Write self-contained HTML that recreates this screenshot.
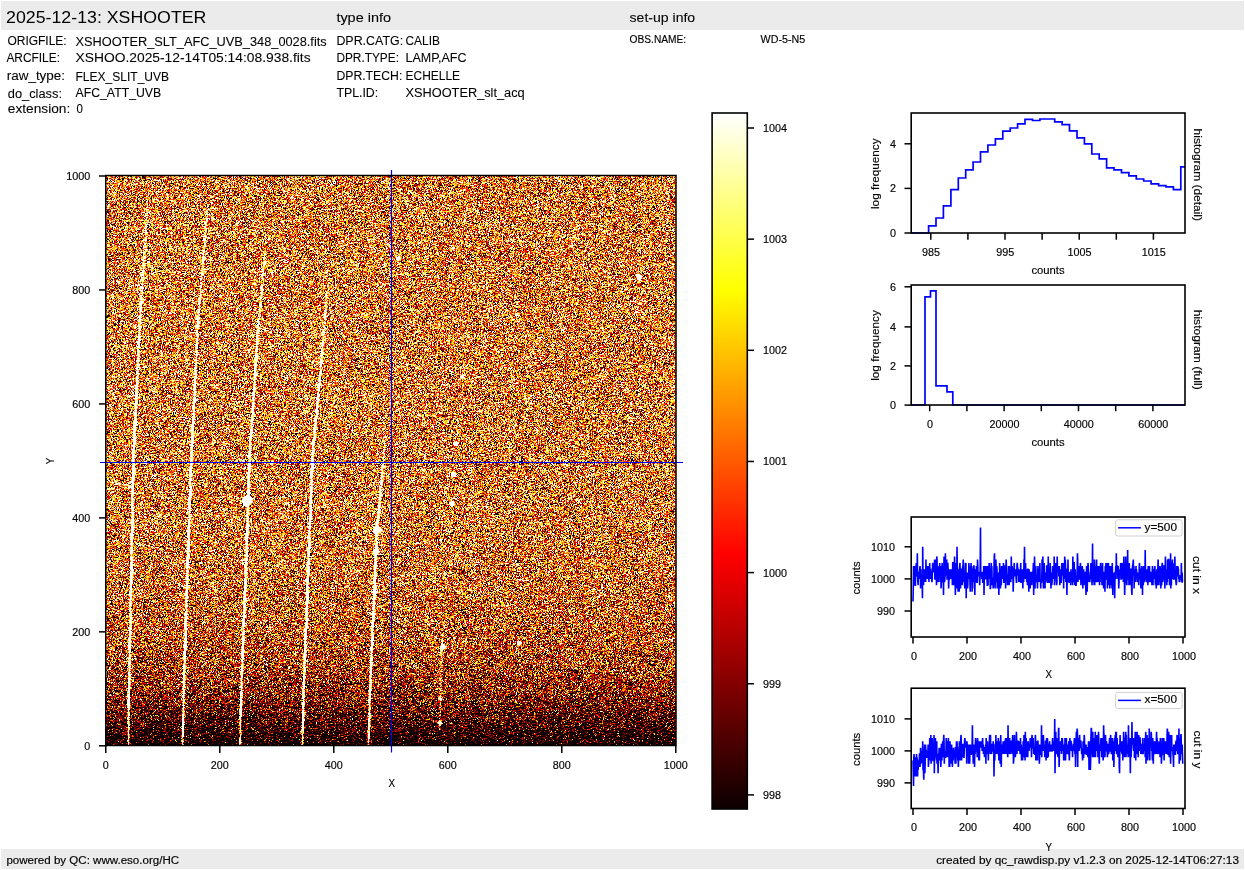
<!DOCTYPE html>
<html><head><meta charset="utf-8"><style>
html,body{margin:0;padding:0;background:#fff;}
body{width:1245px;height:870px;overflow:hidden;position:relative;}
svg{position:absolute;left:0;top:0;}
#imgwrap{position:absolute;left:106px;top:176px;width:570px;height:570px;
background:linear-gradient(to bottom,#d17c36 0%,#d27b36 30%,#ce7a38 50%,#ce7733 65%,#c66b2b 75%,#b85b21 82.5%,#a34616 87.5%,#7b280a 92.5%,#521304 96%,#320801 100%);}
#img{position:absolute;left:0;top:0;width:570px;height:570px;}
</style></head><body>
<div id="imgwrap"><canvas id="img" width="570" height="570"></canvas></div>
<svg width="1245" height="870" viewBox="0 0 1245 870" font-family="Liberation Sans, sans-serif" stroke-width="0">
<rect x="1" y="1" width="1243" height="29" fill="#ebebeb" stroke="none" stroke-width="1"/>
<rect x="1" y="849" width="1243" height="20" fill="#ebebeb" stroke="none" stroke-width="1"/>
<text x="6.1" y="23.1" font-size="17" textLength="200.3" lengthAdjust="spacingAndGlyphs" fill="#000">2025-12-13: XSHOOTER</text>
<text x="336.4" y="22.3" font-size="12" textLength="54.6" lengthAdjust="spacingAndGlyphs" stroke="#000" stroke-width="0.08" fill="#000">type info</text>
<text x="629.6" y="22.3" font-size="12" textLength="65.6" lengthAdjust="spacingAndGlyphs" stroke="#000" stroke-width="0.08" fill="#000">set-up info</text>
<text x="7.4" y="45.2" font-size="12" textLength="59.3" lengthAdjust="spacingAndGlyphs" stroke="#000" stroke-width="0.08" fill="#000">ORIGFILE:</text>
<text x="6.4" y="61.5" font-size="12" textLength="53.6" lengthAdjust="spacingAndGlyphs" stroke="#000" stroke-width="0.08" fill="#000">ARCFILE:</text>
<text x="6.7" y="79.6" font-size="12" textLength="58.4" lengthAdjust="spacingAndGlyphs" stroke="#000" stroke-width="0.08" fill="#000">raw_type:</text>
<text x="7.8" y="97.5" font-size="12" textLength="54.2" lengthAdjust="spacingAndGlyphs" stroke="#000" stroke-width="0.08" fill="#000">do_class:</text>
<text x="7.8" y="113.3" font-size="12" textLength="62.5" lengthAdjust="spacingAndGlyphs" stroke="#000" stroke-width="0.08" fill="#000">extension:</text>
<text x="75.5" y="45.6" font-size="12" textLength="251.2" lengthAdjust="spacingAndGlyphs" stroke="#000" stroke-width="0.08" fill="#000">XSHOOTER_SLT_AFC_UVB_348_0028.fits</text>
<text x="75.5" y="61.5" font-size="12" textLength="235.1" lengthAdjust="spacingAndGlyphs" stroke="#000" stroke-width="0.08" fill="#000">XSHOO.2025-12-14T05:14:08.938.fits</text>
<text x="75.5" y="80.8" font-size="12" textLength="93.6" lengthAdjust="spacingAndGlyphs" stroke="#000" stroke-width="0.08" fill="#000">FLEX_SLIT_UVB</text>
<text x="75.5" y="97.3" font-size="12" textLength="85.7" lengthAdjust="spacingAndGlyphs" stroke="#000" stroke-width="0.08" fill="#000">AFC_ATT_UVB</text>
<text x="76.6" y="113.4" font-size="12" textLength="6.4" lengthAdjust="spacingAndGlyphs" stroke="#000" stroke-width="0.08" fill="#000">0</text>
<text x="336.4" y="44.8" font-size="12" textLength="66.7" lengthAdjust="spacingAndGlyphs" stroke="#000" stroke-width="0.08" fill="#000">DPR.CATG:</text>
<text x="336.4" y="62" font-size="12" textLength="62.6" lengthAdjust="spacingAndGlyphs" stroke="#000" stroke-width="0.08" fill="#000">DPR.TYPE:</text>
<text x="336.4" y="79.7" font-size="12" textLength="65.9" lengthAdjust="spacingAndGlyphs" stroke="#000" stroke-width="0.08" fill="#000">DPR.TECH:</text>
<text x="336.4" y="96.9" font-size="12" textLength="41.8" lengthAdjust="spacingAndGlyphs" stroke="#000" stroke-width="0.08" fill="#000">TPL.ID:</text>
<text x="405.5" y="44.8" font-size="12" textLength="34.5" lengthAdjust="spacingAndGlyphs" stroke="#000" stroke-width="0.08" fill="#000">CALIB</text>
<text x="405.5" y="62" font-size="12" textLength="61" lengthAdjust="spacingAndGlyphs" stroke="#000" stroke-width="0.08" fill="#000">LAMP,AFC</text>
<text x="405.5" y="79.7" font-size="12" textLength="54.6" lengthAdjust="spacingAndGlyphs" stroke="#000" stroke-width="0.08" fill="#000">ECHELLE</text>
<text x="405.5" y="96.9" font-size="12" textLength="119.2" lengthAdjust="spacingAndGlyphs" stroke="#000" stroke-width="0.08" fill="#000">XSHOOTER_slt_acq</text>
<text x="629.6" y="42.8" font-size="10" textLength="56.6" lengthAdjust="spacingAndGlyphs" stroke="#000" stroke-width="0.15" fill="#000">OBS.NAME:</text>
<text x="760.6" y="42.8" font-size="10" textLength="44.5" lengthAdjust="spacingAndGlyphs" stroke="#000" stroke-width="0.15" fill="#000">WD-5-N5</text>
<text x="6.4" y="864.1" font-size="10" textLength="172.7" lengthAdjust="spacingAndGlyphs" stroke="#000" stroke-width="0.15" fill="#000">powered by QC: www.eso.org/HC</text>
<text x="936.2" y="864.1" font-size="10" textLength="302.8" lengthAdjust="spacingAndGlyphs" stroke="#000" stroke-width="0.15" fill="#000">created by qc_rawdisp.py v1.2.3 on 2025-12-14T06:27:13</text>
<line x1="391.5" y1="170" x2="391.5" y2="752.4" stroke="#0000ff" stroke-width="1.2"/>
<line x1="100" y1="462.5" x2="683" y2="462.5" stroke="#0000ff" stroke-width="1.2"/>
<rect x="105.75" y="175.5" width="570.25" height="570.0" fill="none" stroke="#000" stroke-width="1.5"/>
<line x1="99" y1="745.8" x2="105.75" y2="745.8" stroke="#000" stroke-width="1.5"/>
<text x="90.3" y="749.5" font-size="10" textLength="6.0" lengthAdjust="spacingAndGlyphs" stroke="#000" stroke-width="0.15" text-anchor="end" fill="#000">0</text>
<line x1="105.8" y1="745.5" x2="105.8" y2="752.9" stroke="#000" stroke-width="1.5"/>
<text x="105.8" y="769.2" font-size="10" textLength="6.0" lengthAdjust="spacingAndGlyphs" stroke="#000" stroke-width="0.15" text-anchor="middle" fill="#000">0</text>
<line x1="99" y1="631.8399999999999" x2="105.75" y2="631.8399999999999" stroke="#000" stroke-width="1.5"/>
<text x="90.3" y="635.54" font-size="10" textLength="18.0" lengthAdjust="spacingAndGlyphs" stroke="#000" stroke-width="0.15" text-anchor="end" fill="#000">200</text>
<line x1="219.8" y1="745.5" x2="219.8" y2="752.9" stroke="#000" stroke-width="1.5"/>
<text x="219.8" y="769.2" font-size="10" textLength="18.0" lengthAdjust="spacingAndGlyphs" stroke="#000" stroke-width="0.15" text-anchor="middle" fill="#000">200</text>
<line x1="99" y1="517.88" x2="105.75" y2="517.88" stroke="#000" stroke-width="1.5"/>
<text x="90.3" y="521.58" font-size="10" textLength="18.0" lengthAdjust="spacingAndGlyphs" stroke="#000" stroke-width="0.15" text-anchor="end" fill="#000">400</text>
<line x1="333.8" y1="745.5" x2="333.8" y2="752.9" stroke="#000" stroke-width="1.5"/>
<text x="333.8" y="769.2" font-size="10" textLength="18.0" lengthAdjust="spacingAndGlyphs" stroke="#000" stroke-width="0.15" text-anchor="middle" fill="#000">400</text>
<line x1="99" y1="403.91999999999996" x2="105.75" y2="403.91999999999996" stroke="#000" stroke-width="1.5"/>
<text x="90.3" y="407.62" font-size="10" textLength="18.0" lengthAdjust="spacingAndGlyphs" stroke="#000" stroke-width="0.15" text-anchor="end" fill="#000">600</text>
<line x1="447.8" y1="745.5" x2="447.8" y2="752.9" stroke="#000" stroke-width="1.5"/>
<text x="447.8" y="769.2" font-size="10" textLength="18.0" lengthAdjust="spacingAndGlyphs" stroke="#000" stroke-width="0.15" text-anchor="middle" fill="#000">600</text>
<line x1="99" y1="289.96" x2="105.75" y2="289.96" stroke="#000" stroke-width="1.5"/>
<text x="90.3" y="293.66" font-size="10" textLength="18.0" lengthAdjust="spacingAndGlyphs" stroke="#000" stroke-width="0.15" text-anchor="end" fill="#000">800</text>
<line x1="561.8" y1="745.5" x2="561.8" y2="752.9" stroke="#000" stroke-width="1.5"/>
<text x="561.8" y="769.2" font-size="10" textLength="18.0" lengthAdjust="spacingAndGlyphs" stroke="#000" stroke-width="0.15" text-anchor="middle" fill="#000">800</text>
<line x1="99" y1="176.0" x2="105.75" y2="176.0" stroke="#000" stroke-width="1.5"/>
<text x="90.3" y="179.7" font-size="10" textLength="24.0" lengthAdjust="spacingAndGlyphs" stroke="#000" stroke-width="0.15" text-anchor="end" fill="#000">1000</text>
<line x1="675.8" y1="745.5" x2="675.8" y2="752.9" stroke="#000" stroke-width="1.5"/>
<text x="675.8" y="769.2" font-size="10" textLength="24.0" lengthAdjust="spacingAndGlyphs" stroke="#000" stroke-width="0.15" text-anchor="middle" fill="#000">1000</text>
<text x="391.7" y="787" font-size="10" textLength="6.5" lengthAdjust="spacingAndGlyphs" stroke="#000" stroke-width="0.15" text-anchor="middle" fill="#000">X</text>
<text transform="translate(53.9,461) rotate(-90)" font-size="10" textLength="6.5" lengthAdjust="spacingAndGlyphs" stroke="#000" stroke-width="0.15" text-anchor="middle" fill="#000">Y</text>
<defs><linearGradient id="hot" x1="0" y1="1" x2="0" y2="0"><stop offset="0" stop-color="#0b0000"/><stop offset="0.365" stop-color="#ff0000"/><stop offset="0.746" stop-color="#ffff00"/><stop offset="1" stop-color="#ffffff"/></linearGradient></defs>
<rect x="712.1" y="113" width="35.2" height="696" fill="url(#hot)" stroke="#000" stroke-width="1.6"/>
<line x1="747" y1="128.0" x2="754" y2="128.0" stroke="#000" stroke-width="1.5"/>
<text x="763" y="131.9" font-size="10" textLength="24.0" lengthAdjust="spacingAndGlyphs" stroke="#000" stroke-width="0.15" fill="#000">1004</text>
<line x1="747" y1="239.15" x2="754" y2="239.15" stroke="#000" stroke-width="1.5"/>
<text x="763" y="243.05" font-size="10" textLength="24.0" lengthAdjust="spacingAndGlyphs" stroke="#000" stroke-width="0.15" fill="#000">1003</text>
<line x1="747" y1="350.3" x2="754" y2="350.3" stroke="#000" stroke-width="1.5"/>
<text x="763" y="354.2" font-size="10" textLength="24.0" lengthAdjust="spacingAndGlyphs" stroke="#000" stroke-width="0.15" fill="#000">1002</text>
<line x1="747" y1="461.45000000000005" x2="754" y2="461.45000000000005" stroke="#000" stroke-width="1.5"/>
<text x="763" y="465.35" font-size="10" textLength="24.0" lengthAdjust="spacingAndGlyphs" stroke="#000" stroke-width="0.15" fill="#000">1001</text>
<line x1="747" y1="572.6" x2="754" y2="572.6" stroke="#000" stroke-width="1.5"/>
<text x="763" y="576.5" font-size="10" textLength="24.0" lengthAdjust="spacingAndGlyphs" stroke="#000" stroke-width="0.15" fill="#000">1000</text>
<line x1="747" y1="683.75" x2="754" y2="683.75" stroke="#000" stroke-width="1.5"/>
<text x="763" y="687.65" font-size="10" textLength="18.0" lengthAdjust="spacingAndGlyphs" stroke="#000" stroke-width="0.15" fill="#000">999</text>
<line x1="747" y1="794.9000000000001" x2="754" y2="794.9000000000001" stroke="#000" stroke-width="1.5"/>
<text x="763" y="798.8" font-size="10" textLength="18.0" lengthAdjust="spacingAndGlyphs" stroke="#000" stroke-width="0.15" fill="#000">998</text>
<path d="M911.2,233 L928.6,233 L928.6,225.8 L936.0,225.8 L936.0,218 L943.4,218 L943.4,205.9 L950.9,205.9 L950.9,189.7 L958.3,189.7 L958.3,178 L965.7,178 L965.7,169.9 L973.1,169.9 L973.1,162 L980.5,162 L980.5,151.9 L987.9,151.9 L987.9,145 L995.4,145 L995.4,138.8 L1002.8,138.8 L1002.8,131.1 L1010.2,131.1 L1010.2,128 L1017.6,128 L1017.6,123.9 L1025.0,123.9 L1025.0,119.3 L1032.5,119.3 L1032.5,120.5 L1039.9,120.5 L1039.9,119 L1047.3,119 L1047.3,119 L1054.7,119 L1054.7,121.8 L1062.1,121.8 L1062.1,124.7 L1069.5,124.7 L1069.5,130.8 L1077.0,130.8 L1077.0,137.9 L1084.4,137.9 L1084.4,143.8 L1091.8,143.8 L1091.8,154 L1099.2,154 L1099.2,158.8 L1106.6,158.8 L1106.6,167.8 L1114.0,167.8 L1114.0,169.9 L1121.5,169.9 L1121.5,172.7 L1128.9,172.7 L1128.9,175.9 L1136.3,175.9 L1136.3,179 L1143.7,179 L1143.7,181 L1151.1,181 L1151.1,183.8 L1158.6,183.8 L1158.6,185.7 L1166.0,185.7 L1166.0,186.8 L1173.4,186.8 L1173.4,189.7 L1180.8,189.7 L1180.8,166.8 L1185.0,166.8" fill="none" stroke="#0000ff" stroke-width="1.7"/>
<rect x="911.2" y="113" width="273.79999999999995" height="120" fill="none" stroke="#000" stroke-width="1.6"/>
<line x1="904.5" y1="233" x2="911.2" y2="233" stroke="#000" stroke-width="1.5"/>
<text x="896" y="236.7" font-size="10" textLength="6.0" lengthAdjust="spacingAndGlyphs" stroke="#000" stroke-width="0.15" text-anchor="end" fill="#000">0</text>
<line x1="904.5" y1="188.4" x2="911.2" y2="188.4" stroke="#000" stroke-width="1.5"/>
<text x="896" y="192.1" font-size="10" textLength="6.0" lengthAdjust="spacingAndGlyphs" stroke="#000" stroke-width="0.15" text-anchor="end" fill="#000">2</text>
<line x1="904.5" y1="143.8" x2="911.2" y2="143.8" stroke="#000" stroke-width="1.5"/>
<text x="896" y="147.5" font-size="10" textLength="6.0" lengthAdjust="spacingAndGlyphs" stroke="#000" stroke-width="0.15" text-anchor="end" fill="#000">4</text>
<line x1="930.8" y1="233" x2="930.8" y2="239.7" stroke="#000" stroke-width="1.5"/>
<text x="931.0999999999999" y="256.3" font-size="10" textLength="18.0" lengthAdjust="spacingAndGlyphs" stroke="#000" stroke-width="0.15" text-anchor="middle" fill="#000">985</text>
<line x1="967.9" y1="233" x2="967.9" y2="239.7" stroke="#000" stroke-width="1.5"/>
<line x1="1005.0" y1="233" x2="1005.0" y2="239.7" stroke="#000" stroke-width="1.5"/>
<text x="1005.3" y="256.3" font-size="10" textLength="18.0" lengthAdjust="spacingAndGlyphs" stroke="#000" stroke-width="0.15" text-anchor="middle" fill="#000">995</text>
<line x1="1042.1" y1="233" x2="1042.1" y2="239.7" stroke="#000" stroke-width="1.5"/>
<line x1="1079.2" y1="233" x2="1079.2" y2="239.7" stroke="#000" stroke-width="1.5"/>
<text x="1079.5" y="256.3" font-size="10" textLength="24.0" lengthAdjust="spacingAndGlyphs" stroke="#000" stroke-width="0.15" text-anchor="middle" fill="#000">1005</text>
<line x1="1116.3" y1="233" x2="1116.3" y2="239.7" stroke="#000" stroke-width="1.5"/>
<line x1="1153.4" y1="233" x2="1153.4" y2="239.7" stroke="#000" stroke-width="1.5"/>
<text x="1153.7" y="256.3" font-size="10" textLength="24.0" lengthAdjust="spacingAndGlyphs" stroke="#000" stroke-width="0.15" text-anchor="middle" fill="#000">1015</text>
<text x="1048" y="274" font-size="10" textLength="33.2" lengthAdjust="spacingAndGlyphs" stroke="#000" stroke-width="0.15" text-anchor="middle" fill="#000">counts</text>
<text transform="translate(878.5,173.7) rotate(-90)" font-size="10" textLength="70.6" lengthAdjust="spacingAndGlyphs" stroke="#000" stroke-width="0.15" text-anchor="middle" fill="#000">log frequency</text>
<text transform="translate(1194.4,174.8) rotate(90)" font-size="10" textLength="92.4" lengthAdjust="spacingAndGlyphs" stroke="#000" stroke-width="0.15" text-anchor="middle" fill="#000">histogram (detail)</text>
<path d="M911.2,405 L925,405 L925,296.9 L930.5,296.9 L930.5,290.9 L936,290.9 L936,385.8 L947,385.8 L947,391.8 L952.8,391.8 L952.8,405 L1185,405" fill="none" stroke="#0000ff" stroke-width="1.7"/>
<rect x="911.2" y="285" width="273.79999999999995" height="120" fill="none" stroke="#000" stroke-width="1.6"/>
<line x1="904.5" y1="405.1" x2="911.2" y2="405.1" stroke="#000" stroke-width="1.5"/>
<text x="896" y="408.8" font-size="10" textLength="6.0" lengthAdjust="spacingAndGlyphs" stroke="#000" stroke-width="0.15" text-anchor="end" fill="#000">0</text>
<line x1="904.5" y1="365.9" x2="911.2" y2="365.9" stroke="#000" stroke-width="1.5"/>
<text x="896" y="369.6" font-size="10" textLength="6.0" lengthAdjust="spacingAndGlyphs" stroke="#000" stroke-width="0.15" text-anchor="end" fill="#000">2</text>
<line x1="904.5" y1="326.9" x2="911.2" y2="326.9" stroke="#000" stroke-width="1.5"/>
<text x="896" y="330.6" font-size="10" textLength="6.0" lengthAdjust="spacingAndGlyphs" stroke="#000" stroke-width="0.15" text-anchor="end" fill="#000">4</text>
<line x1="904.5" y1="286.8" x2="911.2" y2="286.8" stroke="#000" stroke-width="1.5"/>
<text x="896" y="290.5" font-size="10" textLength="6.0" lengthAdjust="spacingAndGlyphs" stroke="#000" stroke-width="0.15" text-anchor="end" fill="#000">6</text>
<line x1="929.7" y1="405" x2="929.7" y2="411.2" stroke="#000" stroke-width="1.5"/>
<text x="930.0" y="428.3" font-size="10" textLength="6.0" lengthAdjust="spacingAndGlyphs" stroke="#000" stroke-width="0.15" text-anchor="middle" fill="#000">0</text>
<line x1="966.9000000000001" y1="405" x2="966.9000000000001" y2="411.2" stroke="#000" stroke-width="1.5"/>
<line x1="1004.1" y1="405" x2="1004.1" y2="411.2" stroke="#000" stroke-width="1.5"/>
<text x="1004.4" y="428.3" font-size="10" textLength="30.0" lengthAdjust="spacingAndGlyphs" stroke="#000" stroke-width="0.15" text-anchor="middle" fill="#000">20000</text>
<line x1="1041.3" y1="405" x2="1041.3" y2="411.2" stroke="#000" stroke-width="1.5"/>
<line x1="1078.5" y1="405" x2="1078.5" y2="411.2" stroke="#000" stroke-width="1.5"/>
<text x="1078.8" y="428.3" font-size="10" textLength="30.0" lengthAdjust="spacingAndGlyphs" stroke="#000" stroke-width="0.15" text-anchor="middle" fill="#000">40000</text>
<line x1="1115.7" y1="405" x2="1115.7" y2="411.2" stroke="#000" stroke-width="1.5"/>
<line x1="1152.9" y1="405" x2="1152.9" y2="411.2" stroke="#000" stroke-width="1.5"/>
<text x="1153.2" y="428.3" font-size="10" textLength="30.0" lengthAdjust="spacingAndGlyphs" stroke="#000" stroke-width="0.15" text-anchor="middle" fill="#000">60000</text>
<text x="1048" y="446" font-size="10" textLength="33.2" lengthAdjust="spacingAndGlyphs" stroke="#000" stroke-width="0.15" text-anchor="middle" fill="#000">counts</text>
<text transform="translate(878.5,345.5) rotate(-90)" font-size="10" textLength="70.6" lengthAdjust="spacingAndGlyphs" stroke="#000" stroke-width="0.15" text-anchor="middle" fill="#000">log frequency</text>
<text transform="translate(1194.4,349.7) rotate(90)" font-size="10" textLength="80" lengthAdjust="spacingAndGlyphs" stroke="#000" stroke-width="0.15" text-anchor="middle" fill="#000">histogram (full)</text>
<path d="M913.00,601.4 L913.27,588.5 L913.54,566.1 L913.81,578.9 L914.08,585.3 L914.35,575.7 L914.62,572.5 L914.89,566.1 L915.16,585.3 L915.43,585.3 L915.70,569.3 L915.97,572.5 L916.24,562.9 L916.51,566.1 L916.78,575.7 L917.05,575.7 L917.32,553.2 L917.59,575.7 L917.86,582.1 L918.13,585.3 L918.40,572.5 L918.67,572.5 L918.94,578.9 L919.21,575.7 L919.48,572.5 L919.75,569.3 L920.02,566.1 L920.29,572.5 L920.56,588.5 L920.83,569.3 L921.10,585.3 L921.37,575.7 L921.64,585.3 L921.91,575.7 L922.18,582.1 L922.45,598.2 L922.72,546.8 L922.99,575.7 L923.26,569.3 L923.53,585.3 L923.80,575.7 L924.07,569.3 L924.34,575.7 L924.61,572.5 L924.88,572.5 L925.15,582.1 L925.42,569.3 L925.69,582.1 L925.96,559.6 L926.23,578.9 L926.50,569.3 L926.77,575.7 L927.04,566.1 L927.31,578.9 L927.58,566.1 L927.85,575.7 L928.12,566.1 L928.39,569.3 L928.66,572.5 L928.93,582.1 L929.20,569.3 L929.47,572.5 L929.74,562.9 L930.01,578.9 L930.28,569.3 L930.55,569.3 L930.82,572.5 L931.09,572.5 L931.36,572.5 L931.63,578.9 L931.90,582.1 L932.17,578.9 L932.44,569.3 L932.71,562.9 L932.98,566.1 L933.25,566.1 L933.52,569.3 L933.79,569.3 L934.06,572.5 L934.33,569.3 L934.60,559.6 L934.87,578.9 L935.14,578.9 L935.41,559.6 L935.68,572.5 L935.95,566.1 L936.22,569.3 L936.49,585.3 L936.76,556.4 L937.03,559.6 L937.30,572.5 L937.57,569.3 L937.84,572.5 L938.11,582.1 L938.38,575.7 L938.65,572.5 L938.92,566.1 L939.19,569.3 L939.46,575.7 L939.73,562.9 L940.00,582.1 L940.27,569.3 L940.54,566.1 L940.81,575.7 L941.08,588.5 L941.35,582.1 L941.62,572.5 L941.89,569.3 L942.16,562.9 L942.43,582.1 L942.70,575.7 L942.97,569.3 L943.24,575.7 L943.51,594.9 L943.78,569.3 L944.05,556.4 L944.32,566.1 L944.59,582.1 L944.86,578.9 L945.13,572.5 L945.40,553.2 L945.67,569.3 L945.94,572.5 L946.21,562.9 L946.48,575.7 L946.75,559.6 L947.02,578.9 L947.29,578.9 L947.56,569.3 L947.83,562.9 L948.10,569.3 L948.37,572.5 L948.64,588.5 L948.91,578.9 L949.18,578.9 L949.45,578.9 L949.72,569.3 L949.99,578.9 L950.26,569.3 L950.53,572.5 L950.80,578.9 L951.07,572.5 L951.34,572.5 L951.61,569.3 L951.88,578.9 L952.15,575.7 L952.42,585.3 L952.69,562.9 L952.96,562.9 L953.23,575.7 L953.50,578.9 L953.77,585.3 L954.04,572.5 L954.31,572.5 L954.58,556.4 L954.85,572.5 L955.12,582.1 L955.39,594.9 L955.66,562.9 L955.93,572.5 L956.20,588.5 L956.47,572.5 L956.74,588.5 L957.01,546.8 L957.28,566.1 L957.55,569.3 L957.82,575.7 L958.09,591.7 L958.36,575.7 L958.63,588.5 L958.90,569.3 L959.17,591.7 L959.44,582.1 L959.71,566.1 L959.98,562.9 L960.25,585.3 L960.52,588.5 L960.79,569.3 L961.06,569.3 L961.33,582.1 L961.60,578.9 L961.87,578.9 L962.14,585.3 L962.41,578.9 L962.68,566.1 L962.95,569.3 L963.22,559.6 L963.49,575.7 L963.76,575.7 L964.03,582.1 L964.30,575.7 L964.57,585.3 L964.84,588.5 L965.11,569.3 L965.38,562.9 L965.65,569.3 L965.92,562.9 L966.19,598.2 L966.46,578.9 L966.73,572.5 L967.00,578.9 L967.27,582.1 L967.54,588.5 L967.81,585.3 L968.08,575.7 L968.35,572.5 L968.62,578.9 L968.89,562.9 L969.16,572.5 L969.43,569.3 L969.70,566.1 L969.97,582.1 L970.24,591.7 L970.51,569.3 L970.78,578.9 L971.05,562.9 L971.32,572.5 L971.59,566.1 L971.86,569.3 L972.13,591.7 L972.40,569.3 L972.67,578.9 L972.94,582.1 L973.21,578.9 L973.48,569.3 L973.75,566.1 L974.02,566.1 L974.29,588.5 L974.56,578.9 L974.83,594.9 L975.10,575.7 L975.37,569.3 L975.64,582.1 L975.91,572.5 L976.18,572.5 L976.45,566.1 L976.72,582.1 L976.99,582.1 L977.26,582.1 L977.53,559.6 L977.80,566.1 L978.07,575.7 L978.34,572.5 L978.61,572.5 L978.88,572.5 L979.15,575.7 L979.42,578.9 L979.69,585.3 L979.96,578.9 L980.23,562.9 L980.50,527.5 L980.77,575.7 L981.04,575.7 L981.31,575.7 L981.58,572.5 L981.85,578.9 L982.12,572.5 L982.39,572.5 L982.66,582.1 L982.93,582.1 L983.20,582.1 L983.47,582.1 L983.74,566.1 L984.01,594.9 L984.28,575.7 L984.55,578.9 L984.82,578.9 L985.09,572.5 L985.36,566.1 L985.63,575.7 L985.90,575.7 L986.17,578.9 L986.44,575.7 L986.71,566.1 L986.98,578.9 L987.25,585.3 L987.52,585.3 L987.79,582.1 L988.06,585.3 L988.33,566.1 L988.60,572.5 L988.87,575.7 L989.14,562.9 L989.41,578.9 L989.68,569.3 L989.95,569.3 L990.22,588.5 L990.49,588.5 L990.76,582.1 L991.03,566.1 L991.30,562.9 L991.57,585.3 L991.84,566.1 L992.11,578.9 L992.38,578.9 L992.65,578.9 L992.92,578.9 L993.19,588.5 L993.46,582.1 L993.73,585.3 L994.00,569.3 L994.27,556.4 L994.54,553.2 L994.81,578.9 L995.08,588.5 L995.35,578.9 L995.62,582.1 L995.89,559.6 L996.16,569.3 L996.43,582.1 L996.70,566.1 L996.97,569.3 L997.24,588.5 L997.51,578.9 L997.78,575.7 L998.05,575.7 L998.32,572.5 L998.59,578.9 L998.86,594.9 L999.13,578.9 L999.40,582.1 L999.67,562.9 L999.94,572.5 L1000.21,572.5 L1000.48,588.5 L1000.75,575.7 L1001.02,569.3 L1001.29,585.3 L1001.56,566.1 L1001.83,578.9 L1002.10,572.5 L1002.37,575.7 L1002.64,572.5 L1002.91,566.1 L1003.18,578.9 L1003.45,562.9 L1003.72,582.1 L1003.99,582.1 L1004.26,569.3 L1004.53,582.1 L1004.80,578.9 L1005.07,566.1 L1005.34,566.1 L1005.61,588.5 L1005.88,569.3 L1006.15,559.6 L1006.42,566.1 L1006.69,575.7 L1006.96,578.9 L1007.23,575.7 L1007.50,585.3 L1007.77,575.7 L1008.04,575.7 L1008.31,575.7 L1008.58,566.1 L1008.85,575.7 L1009.12,585.3 L1009.39,566.1 L1009.66,582.1 L1009.93,578.9 L1010.20,575.7 L1010.47,578.9 L1010.74,582.1 L1011.01,575.7 L1011.28,556.4 L1011.55,578.9 L1011.82,575.7 L1012.09,566.1 L1012.36,569.3 L1012.63,569.3 L1012.90,569.3 L1013.17,591.7 L1013.44,582.1 L1013.71,572.5 L1013.98,569.3 L1014.25,562.9 L1014.52,572.5 L1014.79,575.7 L1015.06,575.7 L1015.33,575.7 L1015.60,572.5 L1015.87,569.3 L1016.14,578.9 L1016.41,582.1 L1016.68,582.1 L1016.95,566.1 L1017.22,562.9 L1017.49,566.1 L1017.76,569.3 L1018.03,569.3 L1018.30,575.7 L1018.57,569.3 L1018.84,582.1 L1019.11,575.7 L1019.38,582.1 L1019.65,569.3 L1019.92,578.9 L1020.19,575.7 L1020.46,572.5 L1020.73,562.9 L1021.00,582.1 L1021.27,582.1 L1021.54,569.3 L1021.81,582.1 L1022.08,572.5 L1022.35,578.9 L1022.62,575.7 L1022.89,588.5 L1023.16,569.3 L1023.43,578.9 L1023.70,582.1 L1023.97,559.6 L1024.24,569.3 L1024.51,546.8 L1024.78,572.5 L1025.05,578.9 L1025.32,572.5 L1025.59,562.9 L1025.86,575.7 L1026.13,572.5 L1026.40,569.3 L1026.67,582.1 L1026.94,572.5 L1027.21,578.9 L1027.48,585.3 L1027.75,569.3 L1028.02,569.3 L1028.29,575.7 L1028.56,582.1 L1028.83,591.7 L1029.10,569.3 L1029.37,575.7 L1029.64,588.5 L1029.91,575.7 L1030.18,588.5 L1030.45,575.7 L1030.72,572.5 L1030.99,572.5 L1031.26,572.5 L1031.53,572.5 L1031.80,585.3 L1032.07,578.9 L1032.34,578.9 L1032.61,575.7 L1032.88,572.5 L1033.15,569.3 L1033.42,562.9 L1033.69,594.9 L1033.96,572.5 L1034.23,575.7 L1034.50,556.4 L1034.77,566.1 L1035.04,588.5 L1035.31,572.5 L1035.58,578.9 L1035.85,566.1 L1036.12,582.1 L1036.39,575.7 L1036.66,575.7 L1036.93,575.7 L1037.20,578.9 L1037.47,588.5 L1037.74,572.5 L1038.01,566.1 L1038.28,575.7 L1038.55,582.1 L1038.82,572.5 L1039.09,569.3 L1039.36,575.7 L1039.63,575.7 L1039.90,562.9 L1040.17,582.1 L1040.44,578.9 L1040.71,588.5 L1040.98,578.9 L1041.25,582.1 L1041.52,582.1 L1041.79,578.9 L1042.06,559.6 L1042.33,575.7 L1042.60,575.7 L1042.87,556.4 L1043.14,575.7 L1043.41,588.5 L1043.68,572.5 L1043.95,582.1 L1044.22,562.9 L1044.49,585.3 L1044.76,578.9 L1045.03,588.5 L1045.30,572.5 L1045.57,582.1 L1045.84,575.7 L1046.11,578.9 L1046.38,578.9 L1046.65,566.1 L1046.92,566.1 L1047.19,575.7 L1047.46,582.1 L1047.73,582.1 L1048.00,572.5 L1048.27,556.4 L1048.54,578.9 L1048.81,582.1 L1049.08,578.9 L1049.35,582.1 L1049.62,582.1 L1049.89,575.7 L1050.16,562.9 L1050.43,575.7 L1050.70,578.9 L1050.97,588.5 L1051.24,572.5 L1051.51,575.7 L1051.78,585.3 L1052.05,582.1 L1052.32,575.7 L1052.59,566.1 L1052.86,569.3 L1053.13,572.5 L1053.40,578.9 L1053.67,572.5 L1053.94,575.7 L1054.21,556.4 L1054.48,585.3 L1054.75,578.9 L1055.02,566.1 L1055.29,575.7 L1055.56,562.9 L1055.83,575.7 L1056.10,572.5 L1056.37,578.9 L1056.64,585.3 L1056.91,582.1 L1057.18,556.4 L1057.45,569.3 L1057.72,569.3 L1057.99,566.1 L1058.26,569.3 L1058.53,566.1 L1058.80,575.7 L1059.07,575.7 L1059.34,566.1 L1059.61,578.9 L1059.88,585.3 L1060.15,575.7 L1060.42,578.9 L1060.69,569.3 L1060.96,582.1 L1061.23,582.1 L1061.50,578.9 L1061.77,562.9 L1062.04,575.7 L1062.31,572.5 L1062.58,575.7 L1062.85,572.5 L1063.12,566.1 L1063.39,562.9 L1063.66,588.5 L1063.93,562.9 L1064.20,575.7 L1064.47,578.9 L1064.74,556.4 L1065.01,575.7 L1065.28,559.6 L1065.55,566.1 L1065.82,582.1 L1066.09,569.3 L1066.36,569.3 L1066.63,575.7 L1066.90,594.9 L1067.17,578.9 L1067.44,575.7 L1067.71,582.1 L1067.98,559.6 L1068.25,575.7 L1068.52,578.9 L1068.79,575.7 L1069.06,582.1 L1069.33,582.1 L1069.60,572.5 L1069.87,572.5 L1070.14,578.9 L1070.41,575.7 L1070.68,585.3 L1070.95,569.3 L1071.22,582.1 L1071.49,572.5 L1071.76,582.1 L1072.03,578.9 L1072.30,572.5 L1072.57,585.3 L1072.84,556.4 L1073.11,575.7 L1073.38,575.7 L1073.65,582.1 L1073.92,562.9 L1074.19,562.9 L1074.46,572.5 L1074.73,585.3 L1075.00,578.9 L1075.27,569.3 L1075.54,578.9 L1075.81,585.3 L1076.08,585.3 L1076.35,582.1 L1076.62,575.7 L1076.89,578.9 L1077.16,575.7 L1077.43,553.2 L1077.70,559.6 L1077.97,582.1 L1078.24,572.5 L1078.51,572.5 L1078.78,575.7 L1079.05,566.1 L1079.32,578.9 L1079.59,578.9 L1079.86,578.9 L1080.13,575.7 L1080.40,562.9 L1080.67,569.3 L1080.94,585.3 L1081.21,578.9 L1081.48,582.1 L1081.75,569.3 L1082.02,572.5 L1082.29,566.1 L1082.56,575.7 L1082.83,588.5 L1083.10,572.5 L1083.37,572.5 L1083.64,569.3 L1083.91,585.3 L1084.18,572.5 L1084.45,578.9 L1084.72,578.9 L1084.99,572.5 L1085.26,572.5 L1085.53,582.1 L1085.80,588.5 L1086.07,594.9 L1086.34,578.9 L1086.61,566.1 L1086.88,575.7 L1087.15,591.7 L1087.42,582.1 L1087.69,572.5 L1087.96,562.9 L1088.23,566.1 L1088.50,572.5 L1088.77,572.5 L1089.04,582.1 L1089.31,578.9 L1089.58,578.9 L1089.85,582.1 L1090.12,575.7 L1090.39,578.9 L1090.66,572.5 L1090.93,562.9 L1091.20,569.3 L1091.47,572.5 L1091.74,575.7 L1092.01,585.3 L1092.28,575.7 L1092.55,543.6 L1092.82,582.1 L1093.09,566.1 L1093.36,578.9 L1093.63,572.5 L1093.90,578.9 L1094.17,585.3 L1094.44,559.6 L1094.71,585.3 L1094.98,566.1 L1095.25,578.9 L1095.52,572.5 L1095.79,582.1 L1096.06,578.9 L1096.33,566.1 L1096.60,559.6 L1096.87,582.1 L1097.14,575.7 L1097.41,566.1 L1097.68,578.9 L1097.95,569.3 L1098.22,582.1 L1098.49,569.3 L1098.76,572.5 L1099.03,566.1 L1099.30,572.5 L1099.57,585.3 L1099.84,569.3 L1100.11,582.1 L1100.38,569.3 L1100.65,562.9 L1100.92,569.3 L1101.19,578.9 L1101.46,566.1 L1101.73,572.5 L1102.00,585.3 L1102.27,578.9 L1102.54,562.9 L1102.81,575.7 L1103.08,572.5 L1103.35,578.9 L1103.62,588.5 L1103.89,578.9 L1104.16,572.5 L1104.43,572.5 L1104.70,575.7 L1104.97,591.7 L1105.24,566.1 L1105.51,569.3 L1105.78,566.1 L1106.05,562.9 L1106.32,578.9 L1106.59,578.9 L1106.86,572.5 L1107.13,562.9 L1107.40,588.5 L1107.67,575.7 L1107.94,578.9 L1108.21,569.3 L1108.48,562.9 L1108.75,575.7 L1109.02,585.3 L1109.29,575.7 L1109.56,575.7 L1109.83,588.5 L1110.10,566.1 L1110.37,578.9 L1110.64,569.3 L1110.91,585.3 L1111.18,566.1 L1111.45,585.3 L1111.72,566.1 L1111.99,588.5 L1112.26,562.9 L1112.53,578.9 L1112.80,594.9 L1113.07,575.7 L1113.34,572.5 L1113.61,582.1 L1113.88,578.9 L1114.15,572.5 L1114.42,575.7 L1114.69,598.2 L1114.96,578.9 L1115.23,572.5 L1115.50,572.5 L1115.77,566.1 L1116.04,578.9 L1116.31,553.2 L1116.58,569.3 L1116.85,572.5 L1117.12,566.1 L1117.39,566.1 L1117.66,572.5 L1117.93,578.9 L1118.20,566.1 L1118.47,572.5 L1118.74,588.5 L1119.01,582.1 L1119.28,572.5 L1119.55,572.5 L1119.82,572.5 L1120.09,569.3 L1120.36,572.5 L1120.63,562.9 L1120.90,578.9 L1121.17,578.9 L1121.44,572.5 L1121.71,569.3 L1121.98,569.3 L1122.25,562.9 L1122.52,578.9 L1122.79,566.1 L1123.06,572.5 L1123.33,582.1 L1123.60,575.7 L1123.87,556.4 L1124.14,569.3 L1124.41,578.9 L1124.68,594.9 L1124.95,582.1 L1125.22,578.9 L1125.49,575.7 L1125.76,556.4 L1126.03,569.3 L1126.30,572.5 L1126.57,582.1 L1126.84,585.3 L1127.11,575.7 L1127.38,578.9 L1127.65,550.0 L1127.92,578.9 L1128.19,578.9 L1128.46,566.1 L1128.73,575.7 L1129.00,585.3 L1129.27,562.9 L1129.54,575.7 L1129.81,585.3 L1130.08,572.5 L1130.35,569.3 L1130.62,578.9 L1130.89,569.3 L1131.16,569.3 L1131.43,582.1 L1131.70,591.7 L1131.97,594.9 L1132.24,575.7 L1132.51,566.1 L1132.78,566.1 L1133.05,562.9 L1133.32,559.6 L1133.59,575.7 L1133.86,566.1 L1134.13,588.5 L1134.40,569.3 L1134.67,572.5 L1134.94,575.7 L1135.21,578.9 L1135.48,582.1 L1135.75,572.5 L1136.02,566.1 L1136.29,578.9 L1136.56,569.3 L1136.83,578.9 L1137.10,572.5 L1137.37,582.1 L1137.64,572.5 L1137.91,575.7 L1138.18,572.5 L1138.45,578.9 L1138.72,585.3 L1138.99,578.9 L1139.26,566.1 L1139.53,562.9 L1139.80,578.9 L1140.07,569.3 L1140.34,569.3 L1140.61,572.5 L1140.88,588.5 L1141.15,572.5 L1141.42,582.1 L1141.69,566.1 L1141.96,569.3 L1142.23,569.3 L1142.50,594.9 L1142.77,569.3 L1143.04,569.3 L1143.31,585.3 L1143.58,566.1 L1143.85,575.7 L1144.12,575.7 L1144.39,578.9 L1144.66,582.1 L1144.93,578.9 L1145.20,550.0 L1145.47,572.5 L1145.74,572.5 L1146.01,578.9 L1146.28,578.9 L1146.55,578.9 L1146.82,582.1 L1147.09,569.3 L1147.36,575.7 L1147.63,569.3 L1147.90,585.3 L1148.17,566.1 L1148.44,575.7 L1148.71,569.3 L1148.98,575.7 L1149.25,582.1 L1149.52,566.1 L1149.79,578.9 L1150.06,575.7 L1150.33,582.1 L1150.60,572.5 L1150.87,578.9 L1151.14,572.5 L1151.41,572.5 L1151.68,578.9 L1151.95,585.3 L1152.22,572.5 L1152.49,566.1 L1152.76,569.3 L1153.03,585.3 L1153.30,569.3 L1153.57,572.5 L1153.84,572.5 L1154.11,572.5 L1154.38,578.9 L1154.65,572.5 L1154.92,566.1 L1155.19,578.9 L1155.46,585.3 L1155.73,575.7 L1156.00,572.5 L1156.27,588.5 L1156.54,578.9 L1156.81,569.3 L1157.08,575.7 L1157.35,572.5 L1157.62,585.3 L1157.89,566.1 L1158.16,559.6 L1158.43,575.7 L1158.70,582.1 L1158.97,585.3 L1159.24,566.1 L1159.51,572.5 L1159.78,582.1 L1160.05,566.1 L1160.32,569.3 L1160.59,569.3 L1160.86,588.5 L1161.13,575.7 L1161.40,569.3 L1161.67,585.3 L1161.94,566.1 L1162.21,562.9 L1162.48,566.1 L1162.75,582.1 L1163.02,578.9 L1163.29,566.1 L1163.56,566.1 L1163.83,566.1 L1164.10,566.1 L1164.37,575.7 L1164.64,578.9 L1164.91,588.5 L1165.18,569.3 L1165.45,556.4 L1165.72,578.9 L1165.99,578.9 L1166.26,569.3 L1166.53,572.5 L1166.80,585.3 L1167.07,578.9 L1167.34,582.1 L1167.61,559.6 L1167.88,578.9 L1168.15,569.3 L1168.42,559.6 L1168.69,559.6 L1168.96,562.9 L1169.23,562.9 L1169.50,585.3 L1169.77,578.9 L1170.04,582.1 L1170.31,575.7 L1170.58,553.2 L1170.85,588.5 L1171.12,569.3 L1171.39,585.3 L1171.66,562.9 L1171.93,562.9 L1172.20,578.9 L1172.47,559.6 L1172.74,575.7 L1173.01,562.9 L1173.28,572.5 L1173.55,578.9 L1173.82,578.9 L1174.09,575.7 L1174.36,569.3 L1174.63,572.5 L1174.90,556.4 L1175.17,575.7 L1175.44,578.9 L1175.71,578.9 L1175.98,582.1 L1176.25,585.3 L1176.52,582.1 L1176.79,566.1 L1177.06,575.7 L1177.33,575.7 L1177.60,572.5 L1177.87,566.1 L1178.14,569.3 L1178.41,569.3 L1178.68,578.9 L1178.95,575.7 L1179.22,582.1 L1179.49,575.7 L1179.76,582.1 L1180.03,578.9 L1180.30,575.7 L1180.57,575.7 L1180.84,575.7 L1181.11,578.9 L1181.38,562.9 L1181.65,578.9 L1181.92,582.1 L1182.19,572.5 L1182.46,582.1 L1182.73,582.1" fill="none" stroke="#0000ff" stroke-width="1.6"/>
<rect x="911.2" y="517" width="273.79999999999995" height="120" fill="none" stroke="#000" stroke-width="1.6"/>
<line x1="904.5" y1="546.8" x2="911.2" y2="546.8" stroke="#000" stroke-width="1.5"/>
<text x="895" y="550.5" font-size="10" textLength="24.0" lengthAdjust="spacingAndGlyphs" stroke="#000" stroke-width="0.15" text-anchor="end" fill="#000">1010</text>
<line x1="904.5" y1="578.9" x2="911.2" y2="578.9" stroke="#000" stroke-width="1.5"/>
<text x="895" y="582.6" font-size="10" textLength="24.0" lengthAdjust="spacingAndGlyphs" stroke="#000" stroke-width="0.15" text-anchor="end" fill="#000">1000</text>
<line x1="904.5" y1="611.0" x2="911.2" y2="611.0" stroke="#000" stroke-width="1.5"/>
<text x="895" y="614.7" font-size="10" textLength="18.0" lengthAdjust="spacingAndGlyphs" stroke="#000" stroke-width="0.15" text-anchor="end" fill="#000">990</text>
<line x1="913" y1="637" x2="913" y2="643.5" stroke="#000" stroke-width="1.5"/>
<text x="914" y="660.0" font-size="10" textLength="6.0" lengthAdjust="spacingAndGlyphs" stroke="#000" stroke-width="0.15" text-anchor="middle" fill="#000">0</text>
<line x1="967" y1="637" x2="967" y2="643.5" stroke="#000" stroke-width="1.5"/>
<text x="968" y="660.0" font-size="10" textLength="18.0" lengthAdjust="spacingAndGlyphs" stroke="#000" stroke-width="0.15" text-anchor="middle" fill="#000">200</text>
<line x1="1021" y1="637" x2="1021" y2="643.5" stroke="#000" stroke-width="1.5"/>
<text x="1022" y="660.0" font-size="10" textLength="18.0" lengthAdjust="spacingAndGlyphs" stroke="#000" stroke-width="0.15" text-anchor="middle" fill="#000">400</text>
<line x1="1075" y1="637" x2="1075" y2="643.5" stroke="#000" stroke-width="1.5"/>
<text x="1076" y="660.0" font-size="10" textLength="18.0" lengthAdjust="spacingAndGlyphs" stroke="#000" stroke-width="0.15" text-anchor="middle" fill="#000">600</text>
<line x1="1129" y1="637" x2="1129" y2="643.5" stroke="#000" stroke-width="1.5"/>
<text x="1130" y="660.0" font-size="10" textLength="18.0" lengthAdjust="spacingAndGlyphs" stroke="#000" stroke-width="0.15" text-anchor="middle" fill="#000">800</text>
<line x1="1183" y1="637" x2="1183" y2="643.5" stroke="#000" stroke-width="1.5"/>
<text x="1184" y="660.0" font-size="10" textLength="24.0" lengthAdjust="spacingAndGlyphs" stroke="#000" stroke-width="0.15" text-anchor="middle" fill="#000">1000</text>
<text x="1048.8" y="678" font-size="10" textLength="6.5" lengthAdjust="spacingAndGlyphs" stroke="#000" stroke-width="0.15" text-anchor="middle" fill="#000">X</text>
<text transform="translate(860.2,578.0) rotate(-90)" font-size="10" textLength="33.2" lengthAdjust="spacingAndGlyphs" stroke="#000" stroke-width="0.15" text-anchor="middle" fill="#000">counts</text>
<rect x="1115.7" y="519.8" width="66.4" height="16.2" fill="#fff" stroke="#d0d0d0" stroke-width="1" rx="2"/>
<line x1="1118.1" y1="527.8" x2="1140.9" y2="527.8" stroke="#0000ff" stroke-width="1.5"/>
<text x="1144.5" y="530.8" font-size="10" textLength="32.5" lengthAdjust="spacingAndGlyphs" stroke="#000" stroke-width="0.15" fill="#000">y=500</text>
<text transform="translate(1193,575) rotate(90)" font-size="10" textLength="38" lengthAdjust="spacingAndGlyphs" stroke="#000" stroke-width="0.15" text-anchor="middle" fill="#000">cut in x</text>
<path d="M913.00,760.5 L913.27,773.3 L913.54,786.1 L913.81,757.3 L914.08,754.1 L914.35,773.3 L914.62,766.9 L914.89,757.3 L915.16,776.5 L915.43,766.9 L915.70,770.1 L915.97,760.5 L916.24,776.5 L916.51,754.1 L916.78,760.5 L917.05,757.3 L917.32,763.7 L917.59,776.5 L917.86,760.5 L918.13,770.1 L918.40,760.5 L918.67,766.9 L918.94,760.5 L919.21,760.5 L919.48,754.1 L919.75,754.1 L920.02,766.9 L920.29,760.5 L920.56,747.7 L920.83,754.1 L921.10,763.7 L921.37,760.5 L921.64,760.5 L921.91,750.9 L922.18,757.3 L922.45,754.1 L922.72,741.3 L922.99,770.1 L923.26,766.9 L923.53,773.3 L923.80,779.7 L924.07,750.9 L924.34,754.1 L924.61,744.5 L924.88,773.3 L925.15,763.7 L925.42,744.5 L925.69,747.7 L925.96,750.9 L926.23,750.9 L926.50,757.3 L926.77,757.3 L927.04,757.3 L927.31,750.9 L927.58,757.3 L927.85,754.1 L928.12,744.5 L928.39,766.9 L928.66,763.7 L928.93,750.9 L929.20,757.3 L929.47,757.3 L929.74,738.1 L930.01,754.1 L930.28,760.5 L930.55,747.7 L930.82,734.9 L931.09,763.7 L931.36,760.5 L931.63,754.1 L931.90,760.5 L932.17,738.1 L932.44,750.9 L932.71,757.3 L932.98,750.9 L933.25,760.5 L933.52,760.5 L933.79,754.1 L934.06,734.9 L934.33,773.3 L934.60,750.9 L934.87,744.5 L935.14,747.7 L935.41,738.1 L935.68,750.9 L935.95,754.1 L936.22,757.3 L936.49,760.5 L936.76,741.3 L937.03,763.7 L937.30,754.1 L937.57,757.3 L937.84,760.5 L938.11,773.3 L938.38,757.3 L938.65,754.1 L938.92,754.1 L939.19,747.7 L939.46,754.1 L939.73,760.5 L940.00,750.9 L940.27,747.7 L940.54,760.5 L940.81,766.9 L941.08,760.5 L941.35,744.5 L941.62,744.5 L941.89,760.5 L942.16,754.1 L942.43,747.7 L942.70,741.3 L942.97,757.3 L943.24,754.1 L943.51,741.3 L943.78,734.9 L944.05,741.3 L944.32,763.7 L944.59,750.9 L944.86,754.1 L945.13,754.1 L945.40,757.3 L945.67,757.3 L945.94,754.1 L946.21,738.1 L946.48,747.7 L946.75,750.9 L947.02,754.1 L947.29,757.3 L947.56,754.1 L947.83,741.3 L948.10,744.5 L948.37,738.1 L948.64,750.9 L948.91,754.1 L949.18,766.9 L949.45,747.7 L949.72,766.9 L949.99,741.3 L950.26,757.3 L950.53,750.9 L950.80,763.7 L951.07,757.3 L951.34,760.5 L951.61,744.5 L951.88,750.9 L952.15,760.5 L952.42,766.9 L952.69,750.9 L952.96,757.3 L953.23,760.5 L953.50,747.7 L953.77,754.1 L954.04,750.9 L954.31,757.3 L954.58,757.3 L954.85,754.1 L955.12,763.7 L955.39,747.7 L955.66,747.7 L955.93,763.7 L956.20,750.9 L956.47,741.3 L956.74,750.9 L957.01,741.3 L957.28,754.1 L957.55,750.9 L957.82,760.5 L958.09,757.3 L958.36,766.9 L958.63,757.3 L958.90,747.7 L959.17,747.7 L959.44,741.3 L959.71,750.9 L959.98,760.5 L960.25,747.7 L960.52,750.9 L960.79,738.1 L961.06,734.9 L961.33,744.5 L961.60,760.5 L961.87,754.1 L962.14,747.7 L962.41,757.3 L962.68,747.7 L962.95,744.5 L963.22,744.5 L963.49,747.7 L963.76,757.3 L964.03,757.3 L964.30,750.9 L964.57,741.3 L964.84,738.1 L965.11,741.3 L965.38,747.7 L965.65,744.5 L965.92,744.5 L966.19,741.3 L966.46,744.5 L966.73,763.7 L967.00,741.3 L967.27,747.7 L967.54,754.1 L967.81,744.5 L968.08,747.7 L968.35,750.9 L968.62,763.7 L968.89,747.7 L969.16,744.5 L969.43,750.9 L969.70,763.7 L969.97,747.7 L970.24,744.5 L970.51,747.7 L970.78,747.7 L971.05,754.1 L971.32,754.1 L971.59,744.5 L971.86,754.1 L972.13,747.7 L972.40,725.3 L972.67,744.5 L972.94,747.7 L973.21,763.7 L973.48,747.7 L973.75,744.5 L974.02,754.1 L974.29,750.9 L974.56,766.9 L974.83,744.5 L975.10,754.1 L975.37,744.5 L975.64,738.1 L975.91,750.9 L976.18,741.3 L976.45,747.7 L976.72,750.9 L976.99,750.9 L977.26,757.3 L977.53,738.1 L977.80,741.3 L978.07,757.3 L978.34,741.3 L978.61,754.1 L978.88,760.5 L979.15,741.3 L979.42,760.5 L979.69,741.3 L979.96,747.7 L980.23,741.3 L980.50,744.5 L980.77,741.3 L981.04,747.7 L981.31,744.5 L981.58,747.7 L981.85,741.3 L982.12,750.9 L982.39,741.3 L982.66,738.1 L982.93,750.9 L983.20,744.5 L983.47,754.1 L983.74,750.9 L984.01,747.7 L984.28,750.9 L984.55,757.3 L984.82,747.7 L985.09,747.7 L985.36,747.7 L985.63,744.5 L985.90,763.7 L986.17,738.1 L986.44,750.9 L986.71,754.1 L986.98,750.9 L987.25,744.5 L987.52,741.3 L987.79,750.9 L988.06,747.7 L988.33,760.5 L988.60,747.7 L988.87,750.9 L989.14,750.9 L989.41,741.3 L989.68,734.9 L989.95,741.3 L990.22,754.1 L990.49,734.9 L990.76,750.9 L991.03,747.7 L991.30,754.1 L991.57,744.5 L991.84,744.5 L992.11,747.7 L992.38,750.9 L992.65,750.9 L992.92,750.9 L993.19,741.3 L993.46,754.1 L993.73,750.9 L994.00,776.5 L994.27,754.1 L994.54,750.9 L994.81,760.5 L995.08,744.5 L995.35,744.5 L995.62,750.9 L995.89,734.9 L996.16,754.1 L996.43,744.5 L996.70,744.5 L996.97,754.1 L997.24,750.9 L997.51,741.3 L997.78,747.7 L998.05,744.5 L998.32,738.1 L998.59,747.7 L998.86,760.5 L999.13,754.1 L999.40,741.3 L999.67,747.7 L999.94,757.3 L1000.21,763.7 L1000.48,744.5 L1000.75,734.9 L1001.02,757.3 L1001.29,766.9 L1001.56,744.5 L1001.83,750.9 L1002.10,750.9 L1002.37,750.9 L1002.64,754.1 L1002.91,744.5 L1003.18,741.3 L1003.45,744.5 L1003.72,754.1 L1003.99,741.3 L1004.26,747.7 L1004.53,744.5 L1004.80,754.1 L1005.07,741.3 L1005.34,741.3 L1005.61,738.1 L1005.88,747.7 L1006.15,744.5 L1006.42,754.1 L1006.69,741.3 L1006.96,741.3 L1007.23,738.1 L1007.50,750.9 L1007.77,757.3 L1008.04,725.3 L1008.31,750.9 L1008.58,754.1 L1008.85,744.5 L1009.12,741.3 L1009.39,744.5 L1009.66,738.1 L1009.93,744.5 L1010.20,754.1 L1010.47,750.9 L1010.74,750.9 L1011.01,741.3 L1011.28,741.3 L1011.55,747.7 L1011.82,741.3 L1012.09,754.1 L1012.36,747.7 L1012.63,734.9 L1012.90,744.5 L1013.17,738.1 L1013.44,763.7 L1013.71,760.5 L1013.98,754.1 L1014.25,741.3 L1014.52,734.9 L1014.79,754.1 L1015.06,754.1 L1015.33,757.3 L1015.60,754.1 L1015.87,744.5 L1016.14,750.9 L1016.41,731.7 L1016.68,741.3 L1016.95,754.1 L1017.22,744.5 L1017.49,747.7 L1017.76,741.3 L1018.03,741.3 L1018.30,750.9 L1018.57,741.3 L1018.84,744.5 L1019.11,747.7 L1019.38,744.5 L1019.65,741.3 L1019.92,750.9 L1020.19,754.1 L1020.46,738.1 L1020.73,747.7 L1021.00,750.9 L1021.27,744.5 L1021.54,760.5 L1021.81,747.7 L1022.08,757.3 L1022.35,750.9 L1022.62,760.5 L1022.89,754.1 L1023.16,741.3 L1023.43,747.7 L1023.70,757.3 L1023.97,734.9 L1024.24,750.9 L1024.51,734.9 L1024.78,750.9 L1025.05,760.5 L1025.32,731.7 L1025.59,750.9 L1025.86,741.3 L1026.13,738.1 L1026.40,757.3 L1026.67,747.7 L1026.94,750.9 L1027.21,741.3 L1027.48,747.7 L1027.75,757.3 L1028.02,747.7 L1028.29,741.3 L1028.56,750.9 L1028.83,744.5 L1029.10,750.9 L1029.37,747.7 L1029.64,744.5 L1029.91,747.7 L1030.18,738.1 L1030.45,741.3 L1030.72,741.3 L1030.99,741.3 L1031.26,747.7 L1031.53,757.3 L1031.80,738.1 L1032.07,734.9 L1032.34,744.5 L1032.61,747.7 L1032.88,747.7 L1033.15,738.1 L1033.42,744.5 L1033.69,754.1 L1033.96,747.7 L1034.23,754.1 L1034.50,747.7 L1034.77,754.1 L1035.04,754.1 L1035.31,734.9 L1035.58,738.1 L1035.85,760.5 L1036.12,754.1 L1036.39,750.9 L1036.66,750.9 L1036.93,757.3 L1037.20,741.3 L1037.47,760.5 L1037.74,741.3 L1038.01,741.3 L1038.28,750.9 L1038.55,750.9 L1038.82,747.7 L1039.09,744.5 L1039.36,763.7 L1039.63,757.3 L1039.90,744.5 L1040.17,747.7 L1040.44,750.9 L1040.71,754.1 L1040.98,754.1 L1041.25,754.1 L1041.52,725.3 L1041.79,757.3 L1042.06,734.9 L1042.33,744.5 L1042.60,744.5 L1042.87,744.5 L1043.14,750.9 L1043.41,734.9 L1043.68,744.5 L1043.95,747.7 L1044.22,747.7 L1044.49,744.5 L1044.76,757.3 L1045.03,750.9 L1045.30,750.9 L1045.57,741.3 L1045.84,741.3 L1046.11,760.5 L1046.38,747.7 L1046.65,738.1 L1046.92,757.3 L1047.19,757.3 L1047.46,738.1 L1047.73,747.7 L1048.00,750.9 L1048.27,757.3 L1048.54,744.5 L1048.81,750.9 L1049.08,744.5 L1049.35,744.5 L1049.62,741.3 L1049.89,750.9 L1050.16,750.9 L1050.43,747.7 L1050.70,747.7 L1050.97,744.5 L1051.24,750.9 L1051.51,747.7 L1051.78,750.9 L1052.05,750.9 L1052.32,744.5 L1052.59,738.1 L1052.86,750.9 L1053.13,741.3 L1053.40,744.5 L1053.67,747.7 L1053.94,741.3 L1054.21,750.9 L1054.48,741.3 L1054.75,718.9 L1055.02,773.3 L1055.29,744.5 L1055.56,741.3 L1055.83,731.7 L1056.10,754.1 L1056.37,747.7 L1056.64,744.5 L1056.91,754.1 L1057.18,738.1 L1057.45,744.5 L1057.72,754.1 L1057.99,757.3 L1058.26,750.9 L1058.53,728.5 L1058.80,728.5 L1059.07,766.9 L1059.34,760.5 L1059.61,741.3 L1059.88,747.7 L1060.15,750.9 L1060.42,741.3 L1060.69,747.7 L1060.96,744.5 L1061.23,744.5 L1061.50,754.1 L1061.77,738.1 L1062.04,750.9 L1062.31,738.1 L1062.58,741.3 L1062.85,747.7 L1063.12,744.5 L1063.39,747.7 L1063.66,760.5 L1063.93,750.9 L1064.20,744.5 L1064.47,760.5 L1064.74,757.3 L1065.01,738.1 L1065.28,741.3 L1065.55,760.5 L1065.82,744.5 L1066.09,747.7 L1066.36,738.1 L1066.63,750.9 L1066.90,747.7 L1067.17,754.1 L1067.44,744.5 L1067.71,747.7 L1067.98,750.9 L1068.25,750.9 L1068.52,754.1 L1068.79,741.3 L1069.06,754.1 L1069.33,760.5 L1069.60,754.1 L1069.87,738.1 L1070.14,750.9 L1070.41,741.3 L1070.68,741.3 L1070.95,750.9 L1071.22,741.3 L1071.49,744.5 L1071.76,747.7 L1072.03,750.9 L1072.30,747.7 L1072.57,757.3 L1072.84,747.7 L1073.11,750.9 L1073.38,744.5 L1073.65,744.5 L1073.92,750.9 L1074.19,741.3 L1074.46,738.1 L1074.73,747.7 L1075.00,754.1 L1075.27,744.5 L1075.54,766.9 L1075.81,750.9 L1076.08,741.3 L1076.35,731.7 L1076.62,754.1 L1076.89,734.9 L1077.16,728.5 L1077.43,731.7 L1077.70,766.9 L1077.97,738.1 L1078.24,744.5 L1078.51,738.1 L1078.78,747.7 L1079.05,750.9 L1079.32,747.7 L1079.59,734.9 L1079.86,741.3 L1080.13,747.7 L1080.40,744.5 L1080.67,741.3 L1080.94,741.3 L1081.21,747.7 L1081.48,750.9 L1081.75,754.1 L1082.02,750.9 L1082.29,750.9 L1082.56,760.5 L1082.83,757.3 L1083.10,741.3 L1083.37,757.3 L1083.64,757.3 L1083.91,747.7 L1084.18,734.9 L1084.45,738.1 L1084.72,750.9 L1084.99,754.1 L1085.26,750.9 L1085.53,754.1 L1085.80,750.9 L1086.07,744.5 L1086.34,754.1 L1086.61,754.1 L1086.88,747.7 L1087.15,747.7 L1087.42,754.1 L1087.69,754.1 L1087.96,757.3 L1088.23,754.1 L1088.50,741.3 L1088.77,747.7 L1089.04,770.1 L1089.31,741.3 L1089.58,747.7 L1089.85,754.1 L1090.12,747.7 L1090.39,770.1 L1090.66,760.5 L1090.93,738.1 L1091.20,728.5 L1091.47,728.5 L1091.74,754.1 L1092.01,747.7 L1092.28,741.3 L1092.55,757.3 L1092.82,731.7 L1093.09,754.1 L1093.36,744.5 L1093.63,757.3 L1093.90,744.5 L1094.17,747.7 L1094.44,738.1 L1094.71,757.3 L1094.98,747.7 L1095.25,731.7 L1095.52,757.3 L1095.79,744.5 L1096.06,744.5 L1096.33,750.9 L1096.60,747.7 L1096.87,734.9 L1097.14,738.1 L1097.41,741.3 L1097.68,744.5 L1097.95,757.3 L1098.22,747.7 L1098.49,731.7 L1098.76,738.1 L1099.03,757.3 L1099.30,763.7 L1099.57,750.9 L1099.84,744.5 L1100.11,750.9 L1100.38,747.7 L1100.65,744.5 L1100.92,738.1 L1101.19,744.5 L1101.46,738.1 L1101.73,757.3 L1102.00,744.5 L1102.27,744.5 L1102.54,757.3 L1102.81,738.1 L1103.08,760.5 L1103.35,757.3 L1103.62,725.3 L1103.89,734.9 L1104.16,744.5 L1104.43,734.9 L1104.70,738.1 L1104.97,757.3 L1105.24,744.5 L1105.51,734.9 L1105.78,747.7 L1106.05,747.7 L1106.32,750.9 L1106.59,741.3 L1106.86,750.9 L1107.13,750.9 L1107.40,757.3 L1107.67,754.1 L1107.94,744.5 L1108.21,744.5 L1108.48,750.9 L1108.75,754.1 L1109.02,744.5 L1109.29,744.5 L1109.56,738.1 L1109.83,750.9 L1110.10,750.9 L1110.37,741.3 L1110.64,734.9 L1110.91,747.7 L1111.18,747.7 L1111.45,754.1 L1111.72,750.9 L1111.99,738.1 L1112.26,741.3 L1112.53,738.1 L1112.80,760.5 L1113.07,741.3 L1113.34,754.1 L1113.61,741.3 L1113.88,766.9 L1114.15,747.7 L1114.42,754.1 L1114.69,738.1 L1114.96,744.5 L1115.23,734.9 L1115.50,750.9 L1115.77,731.7 L1116.04,750.9 L1116.31,731.7 L1116.58,750.9 L1116.85,754.1 L1117.12,738.1 L1117.39,750.9 L1117.66,747.7 L1117.93,757.3 L1118.20,750.9 L1118.47,744.5 L1118.74,750.9 L1119.01,744.5 L1119.28,766.9 L1119.55,773.3 L1119.82,750.9 L1120.09,734.9 L1120.36,750.9 L1120.63,750.9 L1120.90,750.9 L1121.17,744.5 L1121.44,741.3 L1121.71,750.9 L1121.98,754.1 L1122.25,744.5 L1122.52,741.3 L1122.79,760.5 L1123.06,754.1 L1123.33,750.9 L1123.60,731.7 L1123.87,738.1 L1124.14,741.3 L1124.41,741.3 L1124.68,757.3 L1124.95,738.1 L1125.22,750.9 L1125.49,754.1 L1125.76,731.7 L1126.03,757.3 L1126.30,734.9 L1126.57,744.5 L1126.84,754.1 L1127.11,744.5 L1127.38,754.1 L1127.65,744.5 L1127.92,750.9 L1128.19,757.3 L1128.46,725.3 L1128.73,750.9 L1129.00,738.1 L1129.27,747.7 L1129.54,741.3 L1129.81,757.3 L1130.08,754.1 L1130.35,773.3 L1130.62,738.1 L1130.89,744.5 L1131.16,757.3 L1131.43,741.3 L1131.70,741.3 L1131.97,722.1 L1132.24,744.5 L1132.51,738.1 L1132.78,741.3 L1133.05,741.3 L1133.32,747.7 L1133.59,750.9 L1133.86,741.3 L1134.13,738.1 L1134.40,757.3 L1134.67,757.3 L1134.94,747.7 L1135.21,731.7 L1135.48,747.7 L1135.75,760.5 L1136.02,741.3 L1136.29,741.3 L1136.56,731.7 L1136.83,744.5 L1137.10,731.7 L1137.37,754.1 L1137.64,738.1 L1137.91,744.5 L1138.18,757.3 L1138.45,747.7 L1138.72,734.9 L1138.99,738.1 L1139.26,750.9 L1139.53,738.1 L1139.80,738.1 L1140.07,738.1 L1140.34,744.5 L1140.61,744.5 L1140.88,754.1 L1141.15,747.7 L1141.42,744.5 L1141.69,754.1 L1141.96,747.7 L1142.23,744.5 L1142.50,744.5 L1142.77,738.1 L1143.04,754.1 L1143.31,750.9 L1143.58,744.5 L1143.85,750.9 L1144.12,744.5 L1144.39,750.9 L1144.66,738.1 L1144.93,747.7 L1145.20,757.3 L1145.47,741.3 L1145.74,731.7 L1146.01,763.7 L1146.28,747.7 L1146.55,747.7 L1146.82,738.1 L1147.09,734.9 L1147.36,747.7 L1147.63,760.5 L1147.90,741.3 L1148.17,738.1 L1148.44,744.5 L1148.71,744.5 L1148.98,754.1 L1149.25,728.5 L1149.52,757.3 L1149.79,760.5 L1150.06,738.1 L1150.33,744.5 L1150.60,741.3 L1150.87,744.5 L1151.14,731.7 L1151.41,734.9 L1151.68,750.9 L1151.95,738.1 L1152.22,757.3 L1152.49,760.5 L1152.76,738.1 L1153.03,750.9 L1153.30,763.7 L1153.57,747.7 L1153.84,750.9 L1154.11,741.3 L1154.38,747.7 L1154.65,754.1 L1154.92,750.9 L1155.19,741.3 L1155.46,754.1 L1155.73,744.5 L1156.00,754.1 L1156.27,744.5 L1156.54,731.7 L1156.81,741.3 L1157.08,738.1 L1157.35,744.5 L1157.62,754.1 L1157.89,747.7 L1158.16,747.7 L1158.43,744.5 L1158.70,750.9 L1158.97,741.3 L1159.24,754.1 L1159.51,747.7 L1159.78,747.7 L1160.05,757.3 L1160.32,738.1 L1160.59,747.7 L1160.86,744.5 L1161.13,747.7 L1161.40,763.7 L1161.67,757.3 L1161.94,754.1 L1162.21,738.1 L1162.48,750.9 L1162.75,741.3 L1163.02,754.1 L1163.29,754.1 L1163.56,750.9 L1163.83,738.1 L1164.10,760.5 L1164.37,747.7 L1164.64,744.5 L1164.91,744.5 L1165.18,747.7 L1165.45,741.3 L1165.72,744.5 L1165.99,754.1 L1166.26,741.3 L1166.53,754.1 L1166.80,750.9 L1167.07,734.9 L1167.34,728.5 L1167.61,734.9 L1167.88,744.5 L1168.15,754.1 L1168.42,754.1 L1168.69,731.7 L1168.96,744.5 L1169.23,757.3 L1169.50,734.9 L1169.77,741.3 L1170.04,734.9 L1170.31,744.5 L1170.58,763.7 L1170.85,754.1 L1171.12,747.7 L1171.39,747.7 L1171.66,734.9 L1171.93,750.9 L1172.20,747.7 L1172.47,747.7 L1172.74,747.7 L1173.01,754.1 L1173.28,757.3 L1173.55,766.9 L1173.82,744.5 L1174.09,747.7 L1174.36,744.5 L1174.63,754.1 L1174.90,747.7 L1175.17,754.1 L1175.44,754.1 L1175.71,744.5 L1175.98,741.3 L1176.25,741.3 L1176.52,747.7 L1176.79,750.9 L1177.06,734.9 L1177.33,738.1 L1177.60,750.9 L1177.87,754.1 L1178.14,744.5 L1178.41,744.5 L1178.68,754.1 L1178.95,728.5 L1179.22,763.7 L1179.49,754.1 L1179.76,744.5 L1180.03,738.1 L1180.30,760.5 L1180.57,750.9 L1180.84,734.9 L1181.11,734.9 L1181.38,747.7 L1181.65,747.7 L1181.92,754.1 L1182.19,744.5 L1182.46,754.1 L1182.73,763.7" fill="none" stroke="#0000ff" stroke-width="1.6"/>
<rect x="911.2" y="688.2" width="273.79999999999995" height="120.29999999999995" fill="none" stroke="#000" stroke-width="1.6"/>
<line x1="904.5" y1="718.9" x2="911.2" y2="718.9" stroke="#000" stroke-width="1.5"/>
<text x="895" y="722.6" font-size="10" textLength="24.0" lengthAdjust="spacingAndGlyphs" stroke="#000" stroke-width="0.15" text-anchor="end" fill="#000">1010</text>
<line x1="904.5" y1="750.9" x2="911.2" y2="750.9" stroke="#000" stroke-width="1.5"/>
<text x="895" y="754.6" font-size="10" textLength="24.0" lengthAdjust="spacingAndGlyphs" stroke="#000" stroke-width="0.15" text-anchor="end" fill="#000">1000</text>
<line x1="904.5" y1="782.9" x2="911.2" y2="782.9" stroke="#000" stroke-width="1.5"/>
<text x="895" y="786.6" font-size="10" textLength="18.0" lengthAdjust="spacingAndGlyphs" stroke="#000" stroke-width="0.15" text-anchor="end" fill="#000">990</text>
<line x1="913" y1="808.5" x2="913" y2="815.0" stroke="#000" stroke-width="1.5"/>
<text x="914" y="831.1" font-size="10" textLength="6.0" lengthAdjust="spacingAndGlyphs" stroke="#000" stroke-width="0.15" text-anchor="middle" fill="#000">0</text>
<line x1="967" y1="808.5" x2="967" y2="815.0" stroke="#000" stroke-width="1.5"/>
<text x="968" y="831.1" font-size="10" textLength="18.0" lengthAdjust="spacingAndGlyphs" stroke="#000" stroke-width="0.15" text-anchor="middle" fill="#000">200</text>
<line x1="1021" y1="808.5" x2="1021" y2="815.0" stroke="#000" stroke-width="1.5"/>
<text x="1022" y="831.1" font-size="10" textLength="18.0" lengthAdjust="spacingAndGlyphs" stroke="#000" stroke-width="0.15" text-anchor="middle" fill="#000">400</text>
<line x1="1075" y1="808.5" x2="1075" y2="815.0" stroke="#000" stroke-width="1.5"/>
<text x="1076" y="831.1" font-size="10" textLength="18.0" lengthAdjust="spacingAndGlyphs" stroke="#000" stroke-width="0.15" text-anchor="middle" fill="#000">600</text>
<line x1="1129" y1="808.5" x2="1129" y2="815.0" stroke="#000" stroke-width="1.5"/>
<text x="1130" y="831.1" font-size="10" textLength="18.0" lengthAdjust="spacingAndGlyphs" stroke="#000" stroke-width="0.15" text-anchor="middle" fill="#000">800</text>
<line x1="1183" y1="808.5" x2="1183" y2="815.0" stroke="#000" stroke-width="1.5"/>
<text x="1184" y="831.1" font-size="10" textLength="24.0" lengthAdjust="spacingAndGlyphs" stroke="#000" stroke-width="0.15" text-anchor="middle" fill="#000">1000</text>
<text x="1048.8" y="850.5" font-size="10" textLength="6.5" lengthAdjust="spacingAndGlyphs" stroke="#000" stroke-width="0.15" text-anchor="middle" fill="#000">Y</text>
<text transform="translate(860.2,749.35) rotate(-90)" font-size="10" textLength="33.2" lengthAdjust="spacingAndGlyphs" stroke="#000" stroke-width="0.15" text-anchor="middle" fill="#000">counts</text>
<rect x="1115.7" y="692.4" width="66.4" height="16.2" fill="#fff" stroke="#d0d0d0" stroke-width="1" rx="2"/>
<line x1="1118.1" y1="700.4" x2="1140.9" y2="700.4" stroke="#0000ff" stroke-width="1.5"/>
<text x="1144.5" y="703.4" font-size="10" textLength="32.5" lengthAdjust="spacingAndGlyphs" stroke="#000" stroke-width="0.15" fill="#000">x=500</text>
<text transform="translate(1194,749.5) rotate(90)" font-size="10" textLength="38" lengthAdjust="spacingAndGlyphs" stroke="#000" stroke-width="0.15" text-anchor="middle" fill="#000">cut in y</text>
</svg>
<script>
(function(){
var c=document.getElementById('img');var ctx=c.getContext('2d');
var Wd=570,Hd=570;var im=ctx.createImageData(Wd,Hd);var d=im.data;
var s=123456789;function rnd(){s^=s<<13;s>>>=0;s^=s>>>17;s^=s<<5;s>>>=0;return s/4294967296;}
function gauss(){var u=rnd()||1e-9,v=rnd();return Math.sqrt(-2*Math.log(u))*Math.cos(6.283185*v);}
var vmin=997.87,vmax=1004.13;
/* traces: list of [y,x] points (screen), bright-until y, faint-until y */
var traces=[
 {p:[[745,128.3],[690,129],[460,133.4],[320,140],[205,147.5]],strong:430,top:205},
 {p:[[745,182.6],[690,183.7],[460,191.2],[320,198.2],[205,207.5]],strong:430,top:205},
 {p:[[745,240.1],[690,241.3],[560,246.2],[460,249.4],[320,258.7],[245,266]],strong:430,top:250},
 {p:[[745,302.5],[690,303.7],[460,312.3],[320,325],[290,327.5]],strong:450,top:290},
 {p:[[745,368.5],[690,370],[588,374.5],[530,377],[460,383.4],[440,385]],strong:525,top:440},
 {p:[[735,439.5],[630,442.5]],strong:800,top:630,amp:2}
];
function tx(tr,y){var p=tr.p;for(var k=0;k<p.length-1;k++){if(y<=p[k][0]&&y>=p[k+1][0]){var f=(p[k][0]-y)/(p[k][0]-p[k+1][0]);return p[k][1]+(p[k+1][1]-p[k][1])*f;}}return null;}
var spots=[[247.6,500.7,4.5],[377.2,529.7,3.5],[376.2,552,2.5],[374.5,591.7,2.3],[452,503.8,2],[453.8,474.5,1.8],[455.5,443.4,1.5],[462.8,376.8,1.5],[398.4,258.2,1.5],[639.1,277.1,2.2],[442.8,646.9,2],[440,722.8,1.8],[440,698.6,1.5],[519.3,643.4,1.6]];
for(var j=0;j<Hd;j++){
  var sy=176+j+0.5; var Y=(745.5-sy)/0.57;
  var mean=1001.3-5.6*Math.exp(-Y/95);
  var xs=[];
  for(var t=0;t<traces.length;t++){var tr=traces[t];if(sy>=tr.top&&sy<=tr.p[0][0]){var xc=tx(tr,sy);if(xc!==null){var amp=sy>=tr.strong?9:(tr.amp||(2.5+6.5*(sy-tr.top)/(tr.strong-tr.top)));xs.push([xc,amp]);}}}
  for(var i=0;i<Wd;i++){
    var sx=106+i+0.5;
    var v=mean+2.45*gauss();
    for(var t=0;t<xs.length;t++){var dx=Math.abs(sx-xs[t][0]);if(dx<0.75)v+=xs[t][1];else if(dx<1.5)v+=xs[t][1]*0.4;}
    for(var k=0;k<spots.length;k++){var sp=spots[k];var dd=Math.hypot(sx-sp[0],sy-sp[1]);if(dd<sp[2])v+=10;else if(dd<sp[2]+1)v+=4;}
    v=Math.round(v);
    var tt=(v-vmin)/(vmax-vmin); if(tt<0)tt=0; if(tt>1)tt=1;
    var r=tt<0.365079?0.0416+(1-0.0416)*tt/0.365079:1;
    var g=tt<0.365079?0:(tt<0.746032?(tt-0.365079)/(0.746032-0.365079):1);
    var b=tt<0.746032?0:(tt-0.746032)/(1-0.746032);
    var o=(j*Wd+i)*4;d[o]=r*255;d[o+1]=g*255;d[o+2]=b*255;d[o+3]=255;
  }
}
ctx.putImageData(im,0,0);
})();
</script>
</body></html>
